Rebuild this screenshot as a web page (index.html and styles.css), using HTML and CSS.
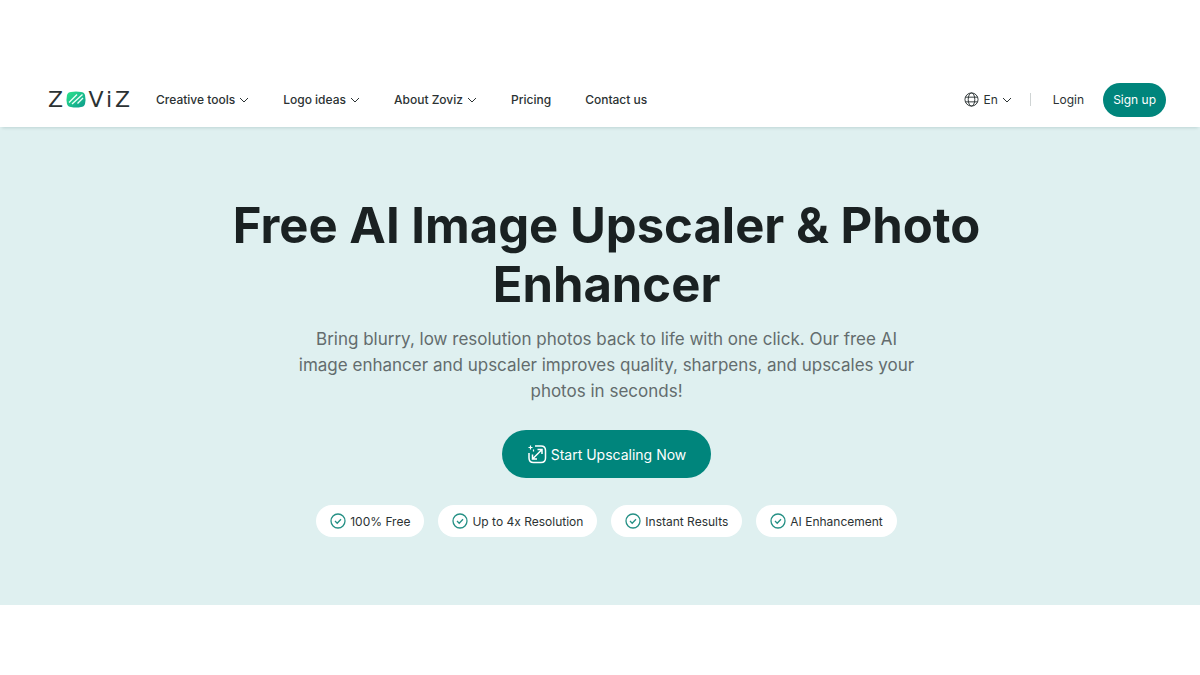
FILE: index.html
```html
<!DOCTYPE html>
<html lang="en">
<head>
  <meta charset="UTF-8">
  <meta name="viewport" content="width=device-width, initial-scale=1.0">
  <title>Free AI Image Upscaler &amp; Photo Enhancer - Zoviz</title>
  <link rel="stylesheet" href="styles.css">
</head>
<body>
  <header class="header">
    <a class="logo" href="#" aria-label="Zoviz">
      <span>Z</span>
      <svg class="logo-mark" viewBox="0 0 20 17">
        <defs>
          <linearGradient id="mark" x1="0" y1="0" x2="1" y2="1">
            <stop offset="0" stop-color="#2be58c"/>
            <stop offset="1" stop-color="#0c9a8c"/>
          </linearGradient>
        </defs>
        <path d="M5 1Q10 0 15 1Q18 1 19 4Q20 8.500 19 13Q18 16 15 16Q10 17 5 16Q2 16 1 13Q0 8.500 1 4Q2 1 5 1Z" fill="url(#mark)"/>
        <path d="M3 11.500L11 3.500M6 13L16.500 3.500M11.500 12.500L17 7" stroke="#e9fff6" stroke-width="1.400" fill="none"/>
      </svg>
      <span>V</span>
      <span>i</span>
      <span>Z</span>
    </a>

    <nav class="nav">
      <a href="#">Creative tools <svg class="chevron" viewBox="0 0 10 6"><path d="M1 1L5 5L9 1"/></svg></a>
      <a href="#">Logo ideas <svg class="chevron" viewBox="0 0 10 6"><path d="M1 1L5 5L9 1"/></svg></a>
      <a href="#">About Zoviz <svg class="chevron" viewBox="0 0 10 6"><path d="M1 1L5 5L9 1"/></svg></a>
      <a href="#">Pricing</a>
      <a href="#">Contact us</a>
    </nav>

    <div class="account">
      <button class="language" type="button">
        <svg class="globe" viewBox="0 0 16 16">
          <circle cx="8" cy="8" r="7"/>
          <ellipse cx="8" cy="8" rx="3.500" ry="7"/>
          <path d="M1.500 5.500H14.500M1.500 10.500H14.500"/>
        </svg>
        En
        <svg class="chevron" viewBox="0 0 10 6"><path d="M1 1L5 5L9 1"/></svg>
      </button>
      <span class="divider"></span>
      <a class="login" href="#">Login</a>
      <button class="signup" type="button">Sign up</button>
    </div>
  </header>

  <main class="hero">
    <h1>Free AI Image Upscaler &amp; Photo Enhancer</h1>
    <p>Bring blurry, low resolution photos back to life with one click. Our free AI image enhancer and upscaler improves quality, sharpens, and upscales your photos in seconds!</p>
    <button class="start" type="button">
      <svg class="upscale" viewBox="0 0 20 20">
        <path d="M8 2H14Q18.500 2 18.500 6.500V14Q18.500 18.500 14 18.500H6.500Q2 18.500 2 14V9"/>
        <path d="M6 14.500L14.500 6M10.500 5.500H15V10M5.500 10.500V15H10"/>
        <path d="M3.500 1.500V5.500M1.500 3.500H5.500M6.500 5.500V7.500" stroke-width="1.200"/>
      </svg>
      Start Upscaling Now
    </button>
    <ul class="features">
      <li><svg class="check" viewBox="0 0 16 16"><circle cx="8" cy="8" r="7"/><path d="M5 8L7.200 10.200L11 6.200"/></svg>100% Free</li>
      <li><svg class="check" viewBox="0 0 16 16"><circle cx="8" cy="8" r="7"/><path d="M5 8L7.200 10.200L11 6.200"/></svg>Up to 4x Resolution</li>
      <li><svg class="check" viewBox="0 0 16 16"><circle cx="8" cy="8" r="7"/><path d="M5 8L7.200 10.200L11 6.200"/></svg>Instant Results</li>
      <li><svg class="check" viewBox="0 0 16 16"><circle cx="8" cy="8" r="7"/><path d="M5 8L7.200 10.200L11 6.200"/></svg>AI Enhancement</li>
    </ul>
  </main>
</body>
</html>
```
FILE: styles.css
```css
* {
  box-sizing: border-box;
}

body {
  margin: 0;
  padding-top: 72px;
  font-family: Inter, sans-serif;
  font-size: 12px;
  color: #2b3233;
  background: #fff;
}

a {
  color: inherit;
  text-decoration: none;
}

button {
  border: none;
  padding: 0;
  font: inherit;
  color: inherit;
  background: none;
  cursor: pointer;
}

svg {
  flex: none;
  fill: none;
  stroke: currentColor;
}

.header {
  position: relative;
  display: flex;
  align-items: center;
  height: 55px;
  padding: 0 34px 0 48px;
  background: #fff;
  box-shadow: 0 3px 3px -2px rgba(0, 60, 60, 0.15);
}

.logo {
  display: flex;
  align-items: center;
  justify-content: space-between;
  width: 82px;
  margin-right: 26px;
  font-family: "DejaVu Sans", sans-serif;
  font-size: 22px;
  line-height: 24px;
}

.logo-mark {
  width: 20px;
  height: 17px;
  stroke: none;
}

.nav {
  display: flex;
  gap: 34px;
  font-weight: 500;
}

.nav a {
  display: flex;
  align-items: center;
  gap: 4px;
  white-space: nowrap;
}

.chevron {
  width: 10px;
  height: 6px;
}

.account {
  display: flex;
  align-items: center;
  margin-left: auto;
}

.language {
  display: flex;
  align-items: center;
  gap: 4px;
}

.globe {
  width: 15px;
  height: 15px;
}

.divider {
  width: 1px;
  height: 13px;
  margin: 0 22px 0 18px;
  background: #cfd4d4;
}

.signup {
  height: 34px;
  margin-left: 19px;
  padding: 0 10px;
  border-radius: 17px;
  color: #fff;
  background: #00857c;
}

.hero {
  display: flex;
  flex-direction: column;
  align-items: center;
  padding: 69px 0 68px 13px;
  text-align: center;
  background: #dff0f0;
}

h1 {
  max-width: 800px;
  margin: 0;
  font-size: 49px;
  font-weight: 700;
  line-height: 59px;
  color: #1a2122;
}

.hero p {
  max-width: 620px;
  margin: 12px 0 26px;
  font-size: 17px;
  line-height: 26px;
  color: #636c6d;
}

.start {
  display: flex;
  align-items: center;
  gap: 4px;
  height: 48px;
  padding: 0 25px;
  border-radius: 24px;
  font-size: 14px;
  color: #fff;
  background: #00857c;
}

.upscale {
  width: 20px;
  height: 20px;
  stroke-width: 1.5;
}

.features {
  display: flex;
  flex-wrap: wrap;
  justify-content: center;
  gap: 14px;
  margin: 27px 0 0;
  padding: 0;
  list-style: none;
}

.features li {
  display: flex;
  align-items: center;
  gap: 4px;
  height: 32px;
  padding: 0 14px;
  border-radius: 16px;
  background: #fff;
}

.check {
  width: 16px;
  height: 16px;
  stroke: #259085;
  stroke-width: 1.3;
}
```
